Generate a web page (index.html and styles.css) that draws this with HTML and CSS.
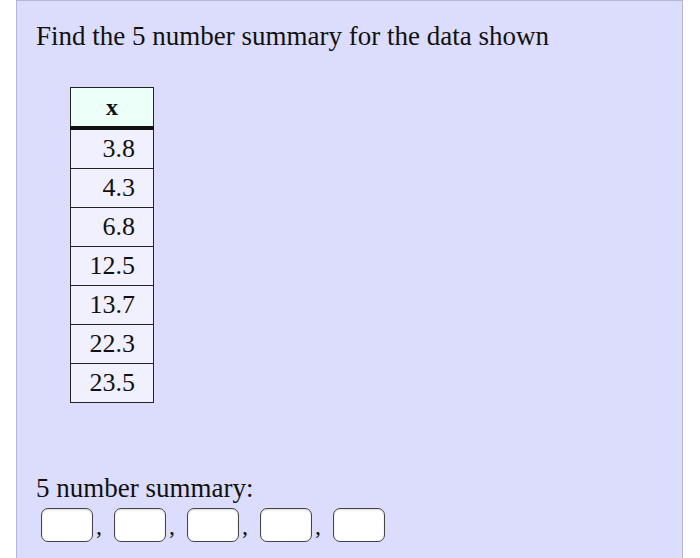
FILE: index.html
```html
<!DOCTYPE html>
<html>
<head>
<meta charset="utf-8">
<link rel="stylesheet" href="styles.css">
</head>
<body>
<div class="panel">
  <p class="title">Find the 5 number summary for the data shown</p>
  <table class="data">
    <thead><tr><th>x</th></tr></thead>
    <tbody>
      <tr><td>3.8</td></tr>
      <tr><td>4.3</td></tr>
      <tr><td>6.8</td></tr>
      <tr><td>12.5</td></tr>
      <tr><td>13.7</td></tr>
      <tr><td>22.3</td></tr>
      <tr><td>23.5</td></tr>
    </tbody>
  </table>
  <p class="label">5 number summary:</p>
  <div class="answers">
    <span class="box"></span><span class="comma">,</span>
    <span class="box"></span><span class="comma">,</span>
    <span class="box"></span><span class="comma">,</span>
    <span class="box"></span><span class="comma">,</span>
    <span class="box"></span>
  </div>
</div>
</body>
</html>
```
FILE: styles.css
```css
html, body {
  margin: 0;
  padding: 0;
  background: #ffffff;
  height: 100%;
}
body {
  font-family: "Liberation Serif", "Times New Roman", serif;
  color: #111;
}
.panel {
  margin-left: 16px;
  width: 667px;
  height: 558px;
  background: #dcdcfc;
  border: 1px solid #b6b6d6;
  border-bottom: none;
  padding: 0 0 0 19px;
  box-sizing: border-box;
}
.title {
  margin: 0;
  padding-top: 19px;
  font-size: 27px;
  line-height: 32px;
}
.data {
  margin: 35px 0 0 34px;
  border-collapse: collapse;
  background: #f0f0ff;
  font-family: "Liberation Serif", "Times New Roman", serif;
  font-size: 26px;
}
.data th {
  width: 82px;
  height: 38px;
  background: #ecfff8;
  border: 1px solid #222;
  border-bottom: 4px solid #111;
  font-weight: bold;
  font-size: 24px;
  text-align: center;
  padding: 0;
}
.data td {
  height: 38px;
  border: 1px solid #222;
  text-align: right;
  padding: 0 18px 0 0;
}
.label {
  margin: 69px 0 0 0;
  font-size: 27px;
  line-height: 32px;
}
.answers {
  display: flex;
  align-items: flex-end;
  margin-top: 4px;
  margin-left: 5px;
}
.box {
  width: 52px;
  height: 34px;
  box-sizing: border-box;
  background: #fff;
  border: 1px solid #444;
  border-radius: 7px;
  box-shadow: inset 0 1px 2px rgba(0,0,0,0.15);
}
.comma {
  width: 18px;
  padding-left: 3px;
  font-size: 24px;
  line-height: 24px;
  text-align: left;
  margin-bottom: 4px;
}
```
